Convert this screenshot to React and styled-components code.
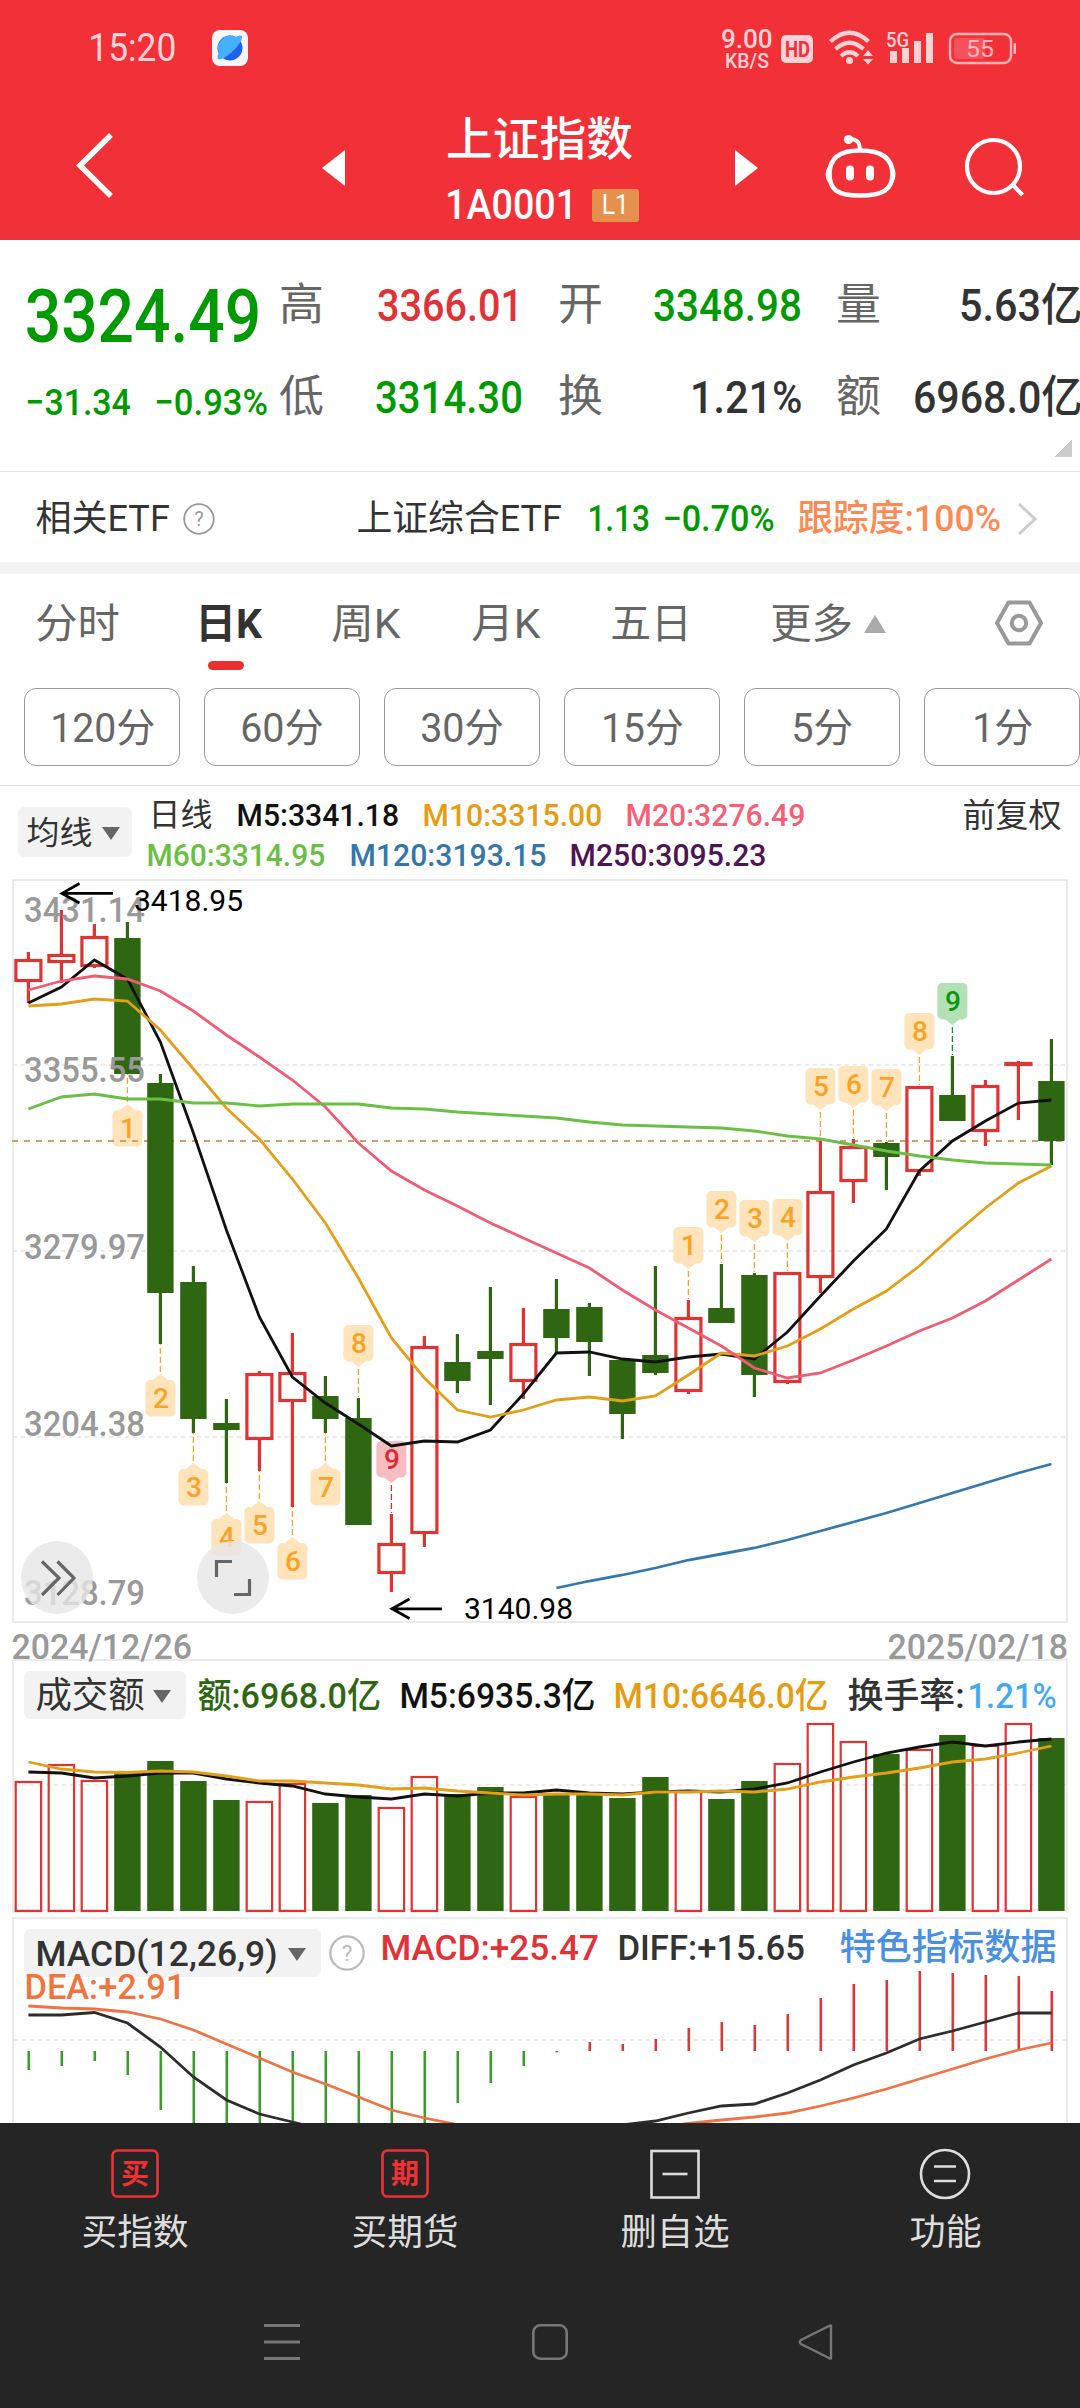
import React, { useLayoutEffect, useRef, useState } from 'react'
import styled, { createGlobalStyle } from 'styled-components'

const RED = '#dd3434'
const GREEN = '#2f6612'
const GRID = '#ebebeb'

const GlobalStyle = createGlobalStyle`
    body {
        margin: 0;
        background: #fff;
        font-family: Roboto, "Noto Sans CJK SC", sans-serif;
    }
    * {
        box-sizing: border-box;
    }
    svg {
        display: block;
        flex: none;
        overflow: visible;
    }
`
const StyledPage = styled.div`
    width: 1080px;
    height: 2408px;
    overflow: hidden;
    display: flex;
    flex-direction: column;
`
const StyledFit = styled.span`
    display: block;
    flex: none;
    width: ${p => p.$w}px;
    height: 1em;
    margin-left: ${p => p.$gap || 0}px;
    font-size: ${p => p.$size}px;
    font-weight: ${p => p.$weight || 'inherit'};
    line-height: 1;
    color: ${p => p.$color || 'inherit'};
    white-space: nowrap;
`
const StyledGlyphs = styled.span`
    display: inline-block;
    transform-origin: 0 50%;
`
const StyledHeader = styled.header`
    height: 240px;
    background: #f23038;
    color: #fff;
`
const StyledStatusBar = styled.div`
    height: 96px;
    display: flex;
    align-items: center;
    padding-left: 90px;
    color: #ffd3d5;
`
const StyledSpeed = styled.div`
    display: flex;
    flex-direction: column;
    align-items: center;
    width: 50px;
    margin-left: 474px;
    padding-top: 2px;
`
const StyledNavBar = styled.div`
    height: 144px;
    display: flex;
    align-items: center;
    padding-left: 77px;
`
const StyledTitle = styled.div`
    width: 192px;
    height: 126px;
    margin: 8px 0 0 102px;
    display: flex;
    flex-direction: column;
    justify-content: space-between;
`
const StyledTitleLine = styled.div`
    height: 60px;
    display: flex;
    align-items: center;
`
const StyledLevel = styled.div`
    width: 47px;
    height: 33px;
    margin-left: 17px;
    border-radius: 3px;
    background: #e5904c;
    display: flex;
    align-items: center;
    justify-content: center;
`
const StyledQuote = styled.section`
    position: relative;
    height: 232px;
    display: flex;
    border-bottom: 1px solid #e3e3e3;
`
const StyledPrice = styled.div`
    width: 281px;
    padding: 31px 0 0 27px;
    color: #009a00;
    font-weight: 500;
`
const StyledPriceLine = styled.div`
    height: ${p => p.$h}px;
    display: flex;
    align-items: center;
`
const StyledStats = styled.div`
    margin-top: 19px;
    height: 184px;
    display: grid;
    grid-template-columns: 240px 240px 242px;
    grid-template-rows: 92px 92px;
    column-gap: 38.5px;
`
const StyledStat = styled.div`
    display: flex;
    align-items: center;
    justify-content: space-between;
    color: #666;
`
const StyledCorner = styled.div`
    position: absolute;
    right: 8px;
    bottom: 14px;
    width: 18px;
    height: 18px;
    background: linear-gradient(135deg, transparent 50%, #ccc 50%);
`
const StyledEtfRow = styled.section`
    height: 102px;
    display: flex;
    align-items: center;
    padding: 3px 0 0 37px;
    border-bottom: 12px solid #f4f4f4;
    color: #333;
`
const StyledTabs = styled.nav`
    height: 98px;
    display: flex;
    align-items: center;
    padding: 2px 0 0 37px;
    color: #666;
`
const StyledTab = styled.div`
    position: relative;
    margin-left: ${p => p.$gap}px;
    color: ${p => (p.$active ? '#333' : '#666')};

    &::after {
        content: '';
        display: ${p => (p.$active ? 'block' : 'none')};
        position: absolute;
        left: 11px;
        top: 57px;
        width: 36px;
        height: 9px;
        border-radius: 5px;
        background: #e93030;
    }
`
const StyledPeriods = styled.div`
    height: 114px;
    display: flex;
    gap: 24px;
    padding: 16px 0 0 24px;
    border-bottom: 1px solid #e3e3e3;
    color: #666;
`
const StyledPeriod = styled.div`
    flex: none;
    width: 156px;
    height: 78px;
    border: 1px solid #999;
    border-radius: 12px;
    display: flex;
    align-items: center;
    justify-content: center;
    padding-top: 4px;
`
const StyledAverages = styled.div`
    height: 89px;
    display: flex;
    align-items: flex-start;
    padding-left: 18px;
    color: #333;
`
const StyledLegend = styled.div`
    width: 798px;
    margin: 9px 0 0 17px;
    font-weight: 500;
`
const StyledLegendRow = styled.div`
    height: 40px;
    display: flex;
    align-items: center;
`
const StyledSelector = styled.div`
    flex: none;
    width: ${p => p.$w}px;
    height: ${p => p.$h}px;
    margin-top: ${p => p.$top || 0}px;
    padding: 2px 0 0 ${p => p.$pad}px;
    border-radius: 6px;
    background: #f2f2f2;
    color: #333;
    display: flex;
    align-items: center;
`
const StyledAdjust = styled.div`
    height: 40px;
    margin: 9px 0 0 17px;
    display: flex;
    align-items: center;
`
const StyledChart = styled.div`
    position: relative;
    height: 750px;
`
const StyledRoundButton = styled.div`
    position: absolute;
    left: ${p => p.$left}px;
    top: 666px;
    width: 72px;
    height: 73px;
    border-radius: 50%;
    background: rgba(230, 230, 230, 0.8);
    display: flex;
    align-items: center;
    justify-content: center;
`
const StyledDates = styled.div`
    height: 34px;
    padding: 11px 14px 0 13px;
    display: flex;
    align-items: center;
    justify-content: space-between;
    color: #999;
    font-weight: 500;
`
const StyledPanel = styled.section`
    height: ${p => p.$h}px;
    margin: 0 12px ${p => p.$after || 0}px;
    border: 2px solid ${GRID};
    border-bottom-width: 0;
`
const StyledPanelHead = styled.div`
    height: ${p => p.$h}px;
    padding: 10px 0 0 10px;
    display: flex;
    align-items: flex-start;
    color: #333;
`
const StyledPanelValues = styled.div`
    height: ${p => p.$h}px;
    display: flex;
    align-items: center;
    font-weight: 500;
`
const StyledSecondRow = styled.div`
    height: 20px;
    padding-left: 12px;
    display: flex;
    align-items: center;
    font-weight: 500;
`
const StyledHelp = styled.div`
    margin: 6px 0 0 8px;
`
const StyledBottom = styled.footer`
    height: 285px;
    background: #252525;
    color: #ddd;
`
const StyledActions = styled.div`
    display: grid;
    grid-template-columns: repeat(4, 270px);
    height: 150px;
`
const StyledAction = styled.div`
    display: flex;
    flex-direction: column;
    align-items: center;
    padding-top: 26px;
    gap: 16px;
`
const StyledSystemNav = styled.div`
    height: 138px;
    display: flex;
    align-items: center;
    padding-left: 264px;
`
const StyledCaret = styled.div`
    flex: none;
    width: 0;
    height: 0;
    margin-left: ${p => p.$gap}px;
    border-left: ${p => p.$half}px solid transparent;
    border-right: ${p => p.$half}px solid transparent;
    ${p => (p.$up ? 'border-bottom' : 'border-top')}: ${p => p.$h}px solid ${p => p.$color};
`

const Fit = ({ children, w, size, gap, color, weight }) => {
    const glyphs = useRef(null)
    const [scale, updateScale] = useState(1)

    useLayoutEffect(() => {
        const natural = glyphs.current.offsetWidth
        if (natural > 0) {
            updateScale((w + size * 0.09) / natural)
        }
    }, [children, w, size, weight])

    return (
        <StyledFit $w={w} $size={size} $gap={gap} $color={color} $weight={weight}>
            <StyledGlyphs ref={glyphs} style={{ transform: `translateX(-0.045em) scaleX(${scale})` }}>{children}</StyledGlyphs>
        </StyledFit>
    )
}

const Help = ({ size, gap = 0, color = '#999', stroke = 2 }) => (
    <svg width={size} height={size} viewBox="0 0 32 32" style={{ marginLeft: gap }}>
        <circle cx="16" cy="16" r="14.8" fill="none" stroke={color} strokeWidth={stroke} />
        <text x="16" y="23" textAnchor="middle" fontSize="20" fill={color}>?</text>
    </svg>
)

const X0 = 28.4
const STEP = 33
const cx = i => X0 + STEP * i
const line = (ys, from = 0) => ys.map((y, i) => `${cx(i + from)},${y}`).join(' ')

// up, high, body top, body bottom, low
const candles = [
    [1, 952, 959, 982, 1003], [1, 910, 954, 963, 983], [1, 924, 936, 967, 968], [0, 922, 938, 1074, 1074],
    [0, 1074, 1083, 1293, 1344], [0, 1266, 1282, 1419, 1433], [0, 1399, 1423, 1430, 1483], [1, 1371, 1373, 1440, 1471],
    [1, 1333, 1372, 1402, 1507], [0, 1376, 1396, 1419, 1433], [0, 1398, 1418, 1525, 1525], [1, 1514, 1543, 1574, 1592],
    [1, 1336, 1346, 1534, 1547], [0, 1334, 1362, 1381, 1393], [0, 1287, 1351, 1359, 1405], [1, 1308, 1343, 1382, 1399],
    [0, 1279, 1309, 1338, 1353], [0, 1303, 1307, 1342, 1376], [0, 1360, 1360, 1414, 1439], [0, 1266, 1355, 1373, 1375],
    [1, 1300, 1317, 1392, 1394], [0, 1264, 1308, 1323, 1323], [0, 1273, 1275, 1375, 1397], [1, 1272, 1272, 1383, 1384],
    [1, 1141, 1191, 1278, 1293], [1, 1139, 1146, 1182, 1203], [0, 1142, 1143, 1157, 1190], [1, 1086, 1086, 1172, 1176],
    [0, 1056, 1095, 1121, 1121], [1, 1080, 1085, 1132, 1146], [1, 1061, 1062, 1066, 1120], [0, 1039, 1081, 1141, 1165]
]

const averages = [
    { color: '#3579ab', from: 16, ys: [1588, 1581, 1575, 1568, 1560, 1554, 1548, 1540, 1531, 1522, 1513, 1503, 1493, 1483, 1473, 1464] },
    { color: '#111', ys: [1003, 987, 960, 979, 1042, 1133, 1230, 1317, 1377, 1403, 1424, 1446, 1441, 1442, 1430, 1394, 1353, 1352, 1359, 1362, 1357, 1354, 1359, 1332, 1296, 1261, 1229, 1171, 1141, 1121, 1103, 1100] },
    { color: '#e39f1a', ys: [1006, 1004, 999, 1001, 1030, 1069, 1108, 1139, 1179, 1223, 1278, 1338, 1378, 1410, 1417, 1410, 1400, 1397, 1401, 1396, 1375, 1353, 1356, 1346, 1329, 1309, 1291, 1266, 1236, 1208, 1183, 1166] },
    { color: '#ee5d74', ys: [990, 981, 976, 979, 991, 1011, 1035, 1057, 1080, 1107, 1143, 1171, 1190, 1206, 1223, 1238, 1253, 1268, 1290, 1310, 1328, 1346, 1368, 1378, 1373, 1360, 1346, 1331, 1318, 1301, 1280, 1259] },
    { color: '#6abf45', ys: [1109, 1097, 1094, 1099, 1099, 1103, 1103, 1106, 1104, 1104, 1104, 1108, 1109, 1112, 1114, 1116, 1118, 1122, 1125, 1126, 1127, 1128, 1131, 1136, 1139, 1145, 1151, 1156, 1160, 1163, 1164, 1165] }
]

const counts = [
    { i: 3, n: 1, below: true }, { i: 4, n: 2, below: true }, { i: 5, n: 3, below: true }, { i: 6, n: 4, below: true },
    { i: 7, n: 5, below: true }, { i: 8, n: 6, below: true }, { i: 9, n: 7, below: true }, { i: 10, n: 8 },
    { i: 11, n: 9, tone: ['#dd2a36', '#f6bec2'] }, { i: 20, n: 1 }, { i: 21, n: 2 }, { i: 22, n: 3 }, { i: 23, n: 4 },
    { i: 24, n: 5 }, { i: 25, n: 6 }, { i: 26, n: 7 }, { i: 27, n: 8 }, { i: 28, n: 9, tone: ['#0c9612', '#b3e0b4'] }
]

const axis = [['3431.14', 922], ['3355.55', 1082], ['3279.97', 1259], ['3204.38', 1436], ['3128.79', 1605]]

const Candle = ({ i, data }) => {
    const [up, high, top, bottom, low] = data
    const x = cx(i)
    const color = up ? RED : GREEN
    return (
        <g stroke={color} strokeWidth="3.2">
            {high < top ? <line x1={x} x2={x} y1={high} y2={top} /> : null}
            {low > bottom ? <line x1={x} x2={x} y1={bottom} y2={low} /> : null}
            {up
                ? <rect x={x - 12.5} y={top + 1.5} width="25" height={Math.max(bottom - top - 3, 0.5)} fill="none" />
                : <rect x={x - 13.2} y={top} width="26.4" height={bottom - top} fill={color} stroke="none" />}
        </g>
    )
}

const CountBadge = ({ i, n, below, tone = ['#f8a325', '#ffe3bb'] }) => {
    const x = cx(i)
    const tip = below ? candles[i][4] + 30 : candles[i][1] - 31
    const dir = below ? 1 : -1
    const top = below ? tip + 6 : tip - 42
    return (
        <g>
            <line x1={x} x2={x} y1={tip - 2 * dir} y2={tip - 30 * dir} stroke={tone[0]} strokeWidth="1.3" strokeDasharray="6 3" />
            <rect x={x - 15} y={top} width="30" height="36.5" rx="5" fill={tone[1]} />
            <path d={`M${x - 8} ${tip + 6.2 * dir}L${x} ${tip}L${x + 8} ${tip + 6.2 * dir}z`} fill={tone[1]} />
            <text x={x + 0.5} y={top + 28} textAnchor="middle" fontSize="28" fontWeight="500" fill={tone[0]}>{n}</text>
        </g>
    )
}

const PriceChart = () => (
    <svg width="1080" height="750" viewBox="0 875 1080 750">
        <rect x="13" y="880" width="1054" height="742" fill="none" stroke={GRID} strokeWidth="2" />
        {[1065, 1251, 1437].map(y => (
            <line key={y} x1="13" x2="1066" y1={y} y2={y} stroke={GRID} strokeWidth="2" strokeDasharray="4 4" />
        ))}
        {counts.map(c => <CountBadge key={c.i} {...c} />)}
        <line x1="12" x2="1066" y1="1141" y2="1141" stroke="#c9a26c" strokeWidth="2" strokeDasharray="6 6" />
        {candles.map((data, i) => <Candle key={i} i={i} data={data} />)}
        {averages.map(a => (
            <polyline key={a.color} points={line(a.ys, a.from)} fill="none" stroke={a.color} strokeWidth="2.8" />
        ))}
        {axis.map(([label, y]) => (
            <text key={label} x="24" y={y} fontSize="35" fontWeight="500" fill="#999" textLength="121" lengthAdjust="spacingAndGlyphs">{label}</text>
        ))}
        <g fill="none" stroke="#000" strokeWidth="2.8">
            <path d="M113 893.4H62M79.5 883.5L62 893.4L79.5 903" />
            <path d="M442 1608.8H391M409.5 1599L392 1608.8L409.5 1618.5" />
        </g>
        <g fontSize="30">
            <text x="134" y="910.5">3418.95</text>
            <text x="464" y="1619">3140.98</text>
        </g>
    </svg>
)

// up, top
const volumes = [
    [1, 1781], [1, 1764], [1, 1780], [0, 1772], [0, 1761], [0, 1781], [0, 1800], [1, 1801], [1, 1783], [0, 1803], [0, 1795],
    [1, 1807], [1, 1776], [0, 1794], [0, 1787], [1, 1796], [0, 1794], [0, 1793], [0, 1798], [0, 1777], [1, 1791], [0, 1799],
    [0, 1781], [1, 1763], [1, 1723], [1, 1741], [0, 1754], [1, 1749], [0, 1735], [1, 1745], [1, 1723], [0, 1738]
]
const volumeLines = [
    { color: '#111', ys: [1772, 1773, 1778, 1776, 1773, 1773, 1779, 1783, 1786, 1794, 1797, 1799, 1794, 1796, 1793, 1793, 1790, 1793, 1794, 1792, 1791, 1792, 1789, 1783, 1772, 1762, 1753, 1747, 1742, 1746, 1742, 1739] },
    { color: '#e39f1a', ys: [1762, 1769, 1772, 1772.5, 1771, 1772, 1776, 1781, 1781, 1783, 1785, 1789, 1788, 1791, 1793, 1795, 1794, 1794, 1795, 1792, 1792, 1791, 1792, 1789, 1782, 1777, 1773, 1768, 1762, 1759, 1753, 1746] }
]

const VolumeChart = () => (
    <svg width="1052" height="190" viewBox="14 1722 1052 190">
        <line x1="14" x2="1066" y1="1785" y2="1785" stroke={GRID} strokeWidth="2" strokeDasharray="4 4" />
        <line x1="14" x2="1066" y1="1910" y2="1910" stroke={GRID} strokeWidth="2" />
        {volumes.map(([up, top], i) => up
            ? <rect key={i} x={cx(i) - 12.7} y={top + 1} width="25.4" height={1910 - top} fill="none" stroke={RED} strokeWidth="2.2" />
            : <rect key={i} x={cx(i) - 13.2} y={top} width="26.4" height={1911 - top} fill={GREEN} />)}
        {volumeLines.map(v => (
            <polyline key={v.color} points={line(v.ys)} fill="none" stroke={v.color} strokeWidth="2.8" />
        ))}
    </svg>
)

const ZERO = 2051
const macd = [
    2070, 2066, 2061, 2075, 2110, 2123, 2123, 2123, 2123, 2123, 2123, 2123, 2123, 2103, 2083, 2066, 2052.5, 2042, 2044, 2039,
    2028, 2022, 2025, 2014, 1998, 1984, 1980, 1971, 1973, 1975, 1976, 1991
]
const diff = [
    2015, 2015, 2012.5, 2023, 2047, 2077, 2100, 2114, 2122, 2130, 2138, 2144, 2148, 2150, 2148, 2144, 2138, 2131, 2125, 2121,
    2113, 2106, 2104, 2093, 2080, 2065, 2053, 2039, 2031, 2022, 2013, 2013
]
const dea = [
    2006, 2008, 2009, 2012, 2019, 2030, 2044, 2058, 2072, 2084, 2097, 2110, 2118, 2124.5, 2130, 2134, 2136, 2135, 2132, 2128,
    2123.5, 2120, 2117, 2113, 2106, 2098, 2089, 2079, 2069, 2059, 2050, 2043
]

const MacdChart = () => (
    <svg width="1052" height="126" viewBox="14 1997 1052 126">
        <line x1="14" x2="1066" y1="2040" y2="2040" stroke={GRID} strokeWidth="2" strokeDasharray="4 4" />
        {macd.map((y, i) => (
            <line key={i} x1={cx(i) + 0.4} x2={cx(i) + 0.4} y1={ZERO} y2={y} stroke={y > ZERO ? '#3d9a2c' : '#d63a3a'} strokeWidth="2.6" />
        ))}
        <polyline points={line(diff)} fill="none" stroke="#2d2d2d" strokeWidth="2.8" />
        <polyline points={line(dea)} fill="none" stroke="#ee7445" strokeWidth="2.8" />
    </svg>
)

const StatusBar = () => (
    <StyledStatusBar>
        <Fit w={85} size={38}>15:20</Fit>
        <svg width="36" height="36" viewBox="0 0 36 36" style={{ marginLeft: 37 }}>
            <rect width="36" height="36" rx="8" fill="#f5f6fa" />
            <circle cx="18" cy="18" r="12.5" fill="#1d62ea" />
            <path d="M6 29C4.500 26 7 23 7 23A12.500 12.500 0 0 1 24 7C27 5.500 29.500 5 30 6.500C30.500 9 27 15.500 21 21C15 26.500 8 31 6 29z" fill="#45b0fd" />
        </svg>
        <StyledSpeed>
            <Fit w={50} size={25} weight={500}>9.00</Fit>
            <Fit w={42} size={19.500} weight={500}>KB/S</Fit>
        </StyledSpeed>
        <svg width="240" height="36" viewBox="780 30 240 36" fill="#ffd3d5" style={{ marginLeft: 8 }}>
            <rect x="781" y="35" width="32" height="28" rx="5" />
            <text x="785" y="57" fontSize="22" fontWeight="700" fill="#f23038" textLength="25" lengthAdjust="spacingAndGlyphs">HD</text>
            <g fill="none" stroke="#ffd3d5" strokeWidth="4.200">
                <path d="M830.500 41.500Q849.500 24 868.500 41.500" />
                <path d="M835.500 49Q849.500 36.500 863.500 49" />
                <path d="M841 56Q849.500 48.500 858 56" />
            </g>
            <circle cx="849.500" cy="60.500" r="3.500" />
            <path d="M863 56L868 50L873 56zM863 59L868 64.500L873 59z" />
            <text x="886" y="46.500" fontSize="21" fontWeight="500" textLength="23" lengthAdjust="spacingAndGlyphs">5G</text>
            <path d="M890 51h7v12h-7zM902 48h7v15h-7zM914 41h7v22h-7zM926 33h7v30h-7z" />
            <rect x="950" y="34" width="61" height="29" rx="7" fill="none" stroke="#ffb3b6" strokeWidth="2.400" />
            <rect x="954" y="38" width="31" height="21" rx="3" fill="#f6505a" />
            <rect x="1013.500" y="43" width="2.500" height="11" rx="1" fill="#ffb3b6" />
            <text x="966" y="57.300" fontSize="24" fill="#ffb9bc" textLength="28" lengthAdjust="spacingAndGlyphs">55</text>
        </svg>
    </StyledStatusBar>
)

const NavBar = () => (
    <StyledNavBar>
        <svg width="36" height="64" viewBox="77 133 36 64" style={{ marginTop: -6 }}>
            <path d="M111 135L80 165.500L111 196" fill="none" stroke="#fff" strokeWidth="5.500" />
        </svg>
        <svg width="23" height="36" viewBox="0 0 23 36" style={{ marginLeft: 209 }}>
            <path d="M23 0V36L0 18z" fill="#fff" />
        </svg>
        <StyledTitle>
            <StyledTitleLine><Fit w={183} size={46} gap={1} weight={500}>上证指数</Fit></StyledTitleLine>
            <StyledTitleLine>
                <Fit w={128} size={42} weight={500}>1A0001</Fit>
                <StyledLevel><Fit w={25} size={27}>L1</Fit></StyledLevel>
            </StyledTitleLine>
        </StyledTitle>
        <svg width="23" height="36" viewBox="0 0 23 36" style={{ marginLeft: 96 }}>
            <path d="M0 0V36L23 18z" fill="#fff" />
        </svg>
        <svg width="70" height="64" viewBox="826 135 70 64" style={{ marginLeft: 67, marginTop: -2 }}>
            <path d="M861 150.500C883 150.500 893.500 159 893.500 174C893.500 189.500 884 195.500 861 195.500C838 195.500 830.500 189.500 830.500 174C830.500 159 839 150.500 861 150.500z" fill="none" stroke="#fff" strokeWidth="4.600" />
            <path d="M860.500 150Q862 139 850 139" fill="none" stroke="#fff" strokeWidth="4" />
            <circle cx="849.500" cy="139.500" r="4.600" fill="#fff" />
            <path d="M832 165.500C825 166 825 183 832 183zM892 165.500C898 166 898 183 892 183z" fill="#fff" />
            <rect x="847" y="165.500" width="8" height="15" rx="4" fill="#fff" />
            <rect x="867" y="165.500" width="8" height="15" rx="4" fill="#fff" />
        </svg>
        <svg width="60" height="60" viewBox="966 138 60 60" style={{ marginLeft: 70 }}>
            <circle cx="994.500" cy="166.500" r="26.500" fill="none" stroke="#fff" strokeWidth="4.200" />
            <path d="M1012.500 183.500L1023.500 195" fill="none" stroke="#fff" strokeWidth="4.200" />
        </svg>
    </StyledNavBar>
)

const UP = '#e13238'
const DOWN = '#009a00'
const stats = [
    ['高', '3366.01', 142, UP], ['开', '3348.98', 145, DOWN], ['量', '5.63亿', 119, '#333'],
    ['低', '3314.30', 144, DOWN], ['换', '1.21%', 108, '#333'], ['额', '6968.0亿', 165, '#333']
]

const Quote = () => (
    <StyledQuote>
        <StyledPrice>
            <StyledPriceLine $h={92}><Fit w={230} size={74} gap={1}>3324.49</Fit></StyledPriceLine>
            <StyledPriceLine $h={78}>
                <Fit w={102} size={37}>−31.34</Fit>
                <Fit w={110} size={37} gap={27}>−0.93%</Fit>
            </StyledPriceLine>
        </StyledPrice>
        <StyledStats>
            {stats.map(([label, value, w, color]) => (
                <StyledStat key={label}>
                    <Fit w={41} size={44}>{label}</Fit>
                    <Fit w={w} size={45} color={color} weight={500}>{value}</Fit>
                </StyledStat>
            ))}
        </StyledStats>
        <StyledCorner />
    </StyledQuote>
)

const tabs = [
    ['分时', 81, 0], ['日K', 65, 79], ['周K', 66, 73], ['月K', 66, 74], ['五日', 78, 73], ['更多', 79, 82]
]
const periods = [['120分', 101], ['60分', 80], ['30分', 80], ['15分', 79], ['5分', 58], ['1分', 57]]

const actions = [
    { label: '买指数', w: 104, icon: '买' },
    { label: '买期货', w: 104, icon: '期' },
    { label: '删自选', w: 106 },
    { label: '功能', w: 69, round: true }
]

const ActionIcon = ({ icon, round }) => {
    if (icon) {
        return (
            <svg width="52" height="50" viewBox="0 0 52 50">
                <rect x="3.500" y="1.500" width="45" height="46" rx="5" fill="none" stroke="#ec3237" strokeWidth="2.600" />
                <text x="26" y="35" textAnchor="middle" fontSize="28" fontWeight="700" fill="#ec3237">{icon}</text>
            </svg>
        )
    }
    return (
        <svg width="52" height="50" viewBox="0 0 52 50" fill="none" stroke="#ddd" strokeWidth="2.600">
            {round ? <circle cx="26" cy="25" r="24" /> : <rect x="2.500" y="2" width="47" height="46.500" />}
            {round ? <path d="M15 17.500H37M15 32H37" /> : <path d="M13.500 25H38.500" />}
        </svg>
    )
}

const App = () => {
    return (
        <StyledPage>
            <GlobalStyle />
            <StyledHeader>
                <StatusBar />
                <NavBar />
            </StyledHeader>
            <Quote />
            <StyledEtfRow>
                <Fit w={131} size={36}>相关ETF</Fit>
                <Help size={32} gap={15} stroke={1.8} />
                <Fit w={202} size={36} gap={143}>上证综合ETF</Fit>
                <Fit w={59} size={36} gap={29} color={DOWN} weight={500}>1.13</Fit>
                <Fit w={109} size={36} gap={16} color={DOWN} weight={500}>−0.70%</Fit>
                <Fit w={200} size={36} gap={26} color="#fb8a55" weight={500}>跟踪度:100%</Fit>
                <svg width="20" height="32" viewBox="0 0 20 32" style={{ marginLeft: 18 }}>
                    <path d="M2 1L18 16L2 31" fill="none" stroke="#ccc" strokeWidth="3" />
                </svg>
            </StyledEtfRow>
            <StyledTabs>
                {tabs.map(([label, w, gap]) => (
                    <StyledTab key={label} $gap={gap} $active={label === '日K'}>
                        <Fit w={w - (label === '日K' ? 2 : 0)} size={41} weight={label === '日K' ? 700 : 400}>{label}</Fit>
                    </StyledTab>
                ))}
                <StyledCaret $up $gap={13} $half={11.5} $h={18} $color="#aaa" />
                <svg width="48" height="46" viewBox="0 0 48 46" style={{ marginLeft: 109, marginTop: -2 }} fill="none" stroke="#999" strokeWidth="4">
                    <path d="M13.500 2.500H34.500L46 23L34.500 43.500H13.500L2 23z" strokeLinejoin="round" />
                    <circle cx="24" cy="23" r="7.200" />
                </svg>
            </StyledTabs>
            <StyledPeriods>
                {periods.map(([label, w]) => (
                    <StyledPeriod key={label}><Fit w={w} size={40}>{label}</Fit></StyledPeriod>
                ))}
            </StyledPeriods>
            <StyledAverages>
                <StyledSelector $w={114} $h={50} $top={21} $pad={10}>
                    <Fit w={63} size={32}>均线</Fit>
                    <StyledCaret $gap={11} $half={9.500} $h={13} $color="#666" />
                </StyledSelector>
                <StyledLegend>
                    <StyledLegendRow>
                        <Fit w={61} size={32} gap={1} weight={400}>日线</Fit>
                        <Fit w={160} size={32} gap={27} color="#111">M5:3341.18</Fit>
                        <Fit w={177} size={32} gap={26} color="#e69c12">M10:3315.00</Fit>
                        <Fit w={177} size={32} gap={26} color="#f65f76">M20:3276.49</Fit>
                    </StyledLegendRow>
                    <StyledLegendRow>
                        <Fit w={176} size={32} gap={-1} color="#6abf45">M60:3314.95</Fit>
                        <Fit w={194} size={32} gap={27} color="#3377aa">M120:3193.15</Fit>
                        <Fit w={194} size={32} gap={26} color="#4f1455">M250:3095.23</Fit>
                    </StyledLegendRow>
                </StyledLegend>
                <StyledAdjust><Fit w={96} size={33}>前复权</Fit></StyledAdjust>
            </StyledAverages>
            <StyledChart>
                <PriceChart />
                <StyledRoundButton $left={21}>
                    <svg width="36" height="36" viewBox="0 0 36 36" fill="none" stroke="#666" strokeWidth="3.200">
                        <path d="M3 1.500L20 18L3 35M18.500 1.500L35 18L18.500 35" />
                    </svg>
                </StyledRoundButton>
                <StyledRoundButton $left={197}>
                    <svg width="36" height="36" viewBox="0 0 36 36" fill="none" stroke="#666" strokeWidth="3.200">
                        <path d="M17 1.500H1.500V17M34.500 19V34.500H19" />
                    </svg>
                </StyledRoundButton>
            </StyledChart>
            <StyledDates>
                <Fit w={177} size={35}>2024/12/26</Fit>
                <Fit w={177} size={35}>2025/02/18</Fit>
            </StyledDates>
            <StyledPanel $h={254} $after={4}>
                <StyledPanelHead $h={61}>
                    <StyledSelector $w={162} $h={48} $pad={13}>
                        <Fit w={106} size={36}>成交额</Fit>
                        <StyledCaret $gap={10} $half={9.500} $h={13} $color="#666" />
                    </StyledSelector>
                    <StyledPanelValues $h={50}>
                        <Fit w={180} size={35} gap={13} color={GREEN}>额:6968.0亿</Fit>
                        <Fit w={193} size={35} gap={22} color="#111">M5:6935.3亿</Fit>
                        <Fit w={212} size={35} gap={21} color="#e69c12">M10:6646.0亿</Fit>
                        <Fit w={114} size={35} gap={22}>换手率:</Fit>
                        <Fit w={86} size={35} gap={6} color="#45a9ec">1.21%</Fit>
                    </StyledPanelValues>
                </StyledPanelHead>
                <VolumeChart />
            </StyledPanel>
            <StyledPanel $h={206}>
                <StyledPanelHead $h={58}>
                    <StyledSelector $w={297} $h={48} $pad={13}>
                        <Fit w={239} size={35} weight={500}>MACD(12,26,9)</Fit>
                        <StyledCaret $gap={12} $half={9.500} $h={13} $color="#666" />
                    </StyledSelector>
                    <StyledHelp><Help size={36} color="#bbb" /></StyledHelp>
                    <StyledPanelValues $h={38}>
                        <Fit w={216} size={35} gap={17} color={UP}>MACD:+25.47</Fit>
                        <Fit w={184} size={35} gap={21}>DIFF:+15.65</Fit>
                        <Fit w={214} size={36} gap={38} color="#4a90e0">特色指标数据</Fit>
                    </StyledPanelValues>
                </StyledPanelHead>
                <StyledSecondRow><Fit w={158} size={35} color="#f0743e">DEA:+2.91</Fit></StyledSecondRow>
                <MacdChart />
            </StyledPanel>
            <StyledBottom>
                <StyledActions>
                    {actions.map(a => (
                        <StyledAction key={a.label}>
                            <ActionIcon icon={a.icon} round={a.round} />
                            <Fit w={a.w} size={36}>{a.label}</Fit>
                        </StyledAction>
                    ))}
                </StyledActions>
                <StyledSystemNav>
                    <svg width="36" height="36" viewBox="0 0 36 36" stroke="#777" strokeWidth="2.800">
                        <path d="M0 1.500H36M0 18H36M0 34.500H36" />
                    </svg>
                    <svg width="36" height="36" viewBox="0 0 36 36" style={{ marginLeft: 232 }}>
                        <rect x="1.300" y="1.300" width="33.400" height="33.400" rx="7" fill="none" stroke="#777" strokeWidth="2.600" />
                    </svg>
                    <svg width="33" height="36" viewBox="0 0 33 36" style={{ marginLeft: 231 }}>
                        <path d="M32 1.500V34.500Q31.500 35 30 34L2 20Q-0.500 18 2 16L30 2Q31.500 1 32 1.500z" fill="none" stroke="#777" strokeWidth="2.400" />
                    </svg>
                </StyledSystemNav>
            </StyledBottom>
        </StyledPage>
    )
}

export default App
